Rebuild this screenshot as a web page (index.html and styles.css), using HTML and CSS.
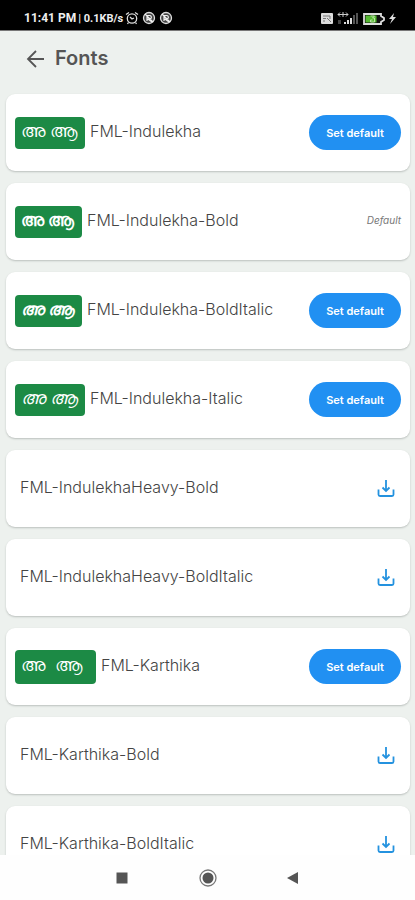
FILE: index.html
```html
<!DOCTYPE html>
<html lang="en">
<head>
<meta charset="utf-8">
<meta name="viewport" content="width=device-width, initial-scale=1">
<title>Fonts</title>
<link rel="stylesheet" href="styles.css">
</head>
<body>
<svg class="sprite" aria-hidden="true">
  <symbol id="download" viewBox="0 0 18 18"><path d="M9 0v11M5.500 7.500L9 11 12.500 7.500M1.500 9.500v5q0 1.500 1.500 1.500h12q1.500 0 1.500-1.500v-5" fill="none" stroke="currentColor" stroke-width="1.800"/></symbol>
  <symbol id="muted" viewBox="0 0 14 14"><circle cx="7" cy="7" r="5.500" fill="#444" stroke="#ddd" stroke-width="1.300"/><path d="M3 3l8 8M5 10V4.500h3a1.800 1.800 0 0 1 0 3.500H6l4 3" fill="none" stroke="#eee" stroke-width="1.200"/></symbol>
</svg>
<div class="screen">
  <div class="status">
    <span class="clock">11:41 PM</span><span class="rate">| 0.1KB/s</span>
    <svg class="status-icon" viewBox="0 0 14 14" fill="none" stroke="#ddd" stroke-width="1.300"><circle cx="7" cy="7.500" r="4.700"/><path d="M1 3.500l3-2M13 3.500l-3-2M5 6l2 2 2-1M3.500 11.500L2.500 13M10.500 11.500l1 1.500"/></svg>
    <svg class="status-icon gap" viewBox="0 0 14 14"><use href="#muted"/></svg>
    <svg class="status-icon gap" viewBox="0 0 14 14"><use href="#muted"/></svg>
    <svg class="signals" viewBox="0 0 78 14">
      <rect x="0" y="2" width="12" height="11" rx="1" fill="#ddd"/><path d="M2 5h7M2 7.500h3M2 10h2M6 7l4 4M9 5v3" stroke="#777" fill="none"/>
      <path d="M17 3.500h10M19 1.500l-2 2 2 2M22 1v5M25 1.500l2 2-2 2" stroke="#ccc" fill="none"/><path d="M17 9h3v4h-3z" fill="#444"/>
      <path d="M23 11h2v2h-2zM26 9h2v4h-2zM29 7h2v6h-2z" fill="#ddd"/><path d="M32 4h2v9h-2zM35 2h2v11h-2z" fill="#555"/>
      <path d="M43 3h17v2l3 2v2l-3 2v2H43z" fill="#111" stroke="#ddd" stroke-width="1.800"/><path d="M44.500 4.500h11v7h-11z" fill="#55b931"/><path d="M49.500 5h4l-2 2h2v4h-4V9h2" fill="none" stroke="#b9e4a5"/>
      <path d="M73 2l-5 6h3l-2 5 6-7h-3z" fill="#ddd"/>
    </svg>
  </div>
  <header class="header">
    <button class="back" aria-label="Back"><svg viewBox="0 0 20 20"><path d="M19 11H3M11 3l-8 8 8 8" fill="none" stroke="currentColor" stroke-width="1.800"/></svg></button>
    <h1>Fonts</h1>
  </header>
  <main class="list">
    <article class="card"><span class="sample" lang="ml"><span>അ</span> <span>ആ</span></span><h2>FML-Indulekha</h2><button class="set">Set default</button></article>
    <article class="card"><span class="sample bold" lang="ml"><span>അ</span> <span>ആ</span></span><h2>FML-Indulekha-Bold</h2><em class="current">Default</em></article>
    <article class="card"><span class="sample bold italic" lang="ml"><span>അ</span> <span>ആ</span></span><h2>FML-Indulekha-BoldItalic</h2><button class="set">Set default</button></article>
    <article class="card"><span class="sample italic" lang="ml"><span>അ</span> <span>ആ</span></span><h2>FML-Indulekha-Italic</h2><button class="set">Set default</button></article>
    <article class="card"><h2>FML-IndulekhaHeavy-Bold</h2><button class="get" aria-label="Download"><svg><use href="#download"/></svg></button></article>
    <article class="card"><h2>FML-IndulekhaHeavy-BoldItalic</h2><button class="get" aria-label="Download"><svg><use href="#download"/></svg></button></article>
    <article class="card"><span class="sample wide" lang="ml"><span>അ</span> <span>ആ</span></span><h2>FML-Karthika</h2><button class="set">Set default</button></article>
    <article class="card"><h2>FML-Karthika-Bold</h2><button class="get" aria-label="Download"><svg><use href="#download"/></svg></button></article>
    <article class="card"><h2>FML-Karthika-BoldItalic</h2><button class="get" aria-label="Download"><svg><use href="#download"/></svg></button></article>
  </main>
  <nav class="system">
    <button aria-label="Recent apps"><svg viewBox="0 0 20 20"><path d="M4.500 4.500h11v11h-11z" fill="#555"/></svg></button>
    <button aria-label="Home"><svg viewBox="0 0 20 20"><circle cx="10" cy="10" r="8" fill="none" stroke="#777" stroke-width="1.300"/><circle cx="10" cy="10" r="5.500" fill="#555"/></svg></button>
    <button aria-label="Go back"><svg viewBox="0 0 20 20"><path d="M14 4v12L3 10z" fill="#555"/></svg></button>
  </nav>
</div>
</body>
</html>
```
FILE: styles.css
```css
* { box-sizing: border-box; }
body { margin: 0; background: #edf1ee; font-family: Inter, "Noto Sans", sans-serif; color: #444; }
button { border: 0; padding: 0; background: none; font-family: inherit; color: inherit; }
svg { display: block; flex: none; }
h1, h2 { margin: 0; }
.sprite { position: absolute; width: 0; height: 0; }
.screen { display: flex; flex-direction: column; height: 100vh; overflow: hidden; }

.status { flex: none; display: flex; align-items: center; height: 31px; padding: 6px 16px 0 24px; background: #000; border-bottom: 1px solid #777; color: #eee; font-family: Roboto, sans-serif; }
.clock { font-size: 12px; font-weight: 700; }
.rate { margin: 0 2px; font-size: 11px; font-weight: 700; }
.status-icon { width: 14px; height: 14px; }
.gap { margin-left: 3px; }
.signals { width: 78px; height: 14px; margin-left: auto; }

.header { flex: none; display: flex; align-items: center; gap: 10px; height: 54px; padding: 0 25px; color: #555; }
.back svg { width: 20px; height: 20px; }
h1 { font-size: 20px; line-height: 24px; font-weight: 600; }

.list { flex: 1; min-height: 0; overflow: hidden; display: flex; flex-direction: column; gap: 12px; padding: 9px 5px 0 6px; }
.card { flex: none; display: flex; align-items: center; height: 77px; padding: 0 9px; background: #fff; border-radius: 9px; box-shadow: 0 1px 2px #bbc0bd; }
h2 { margin-left: 5px; padding-bottom: 3px; font-size: 16px; line-height: 22px; font-weight: 300; white-space: nowrap; }
.sample { flex: none; display: flex; align-items: center; gap: 5px; width: 70px; height: 32px; padding: 0 0 3px 6px; border-radius: 4px; background: #1c8a45; color: #fff; font-size: 18px; line-height: 24px; font-weight: 500; }
.bold { gap: 4px; width: 67px; font-size: 17px; font-weight: 800; }
.wide { gap: 10px; width: 81px; height: 34px; }
.italic { font-style: italic; }
.set { flex: none; width: 92px; height: 35px; margin-left: auto; border-radius: 18px; background: #2190f2; color: #fff; font-size: 11px; font-weight: 600; }
.current { margin-left: auto; padding-bottom: 3px; font-size: 10px; color: #777; }
.get { margin: 0 6px 0 auto; color: #2492df; }
.get svg { width: 18px; height: 18px; }

.system { flex: none; display: flex; justify-content: center; gap: 66px; height: 45px; padding-top: 13px; background: #fefefe; }
.system button { width: 20px; height: 20px; }
```
